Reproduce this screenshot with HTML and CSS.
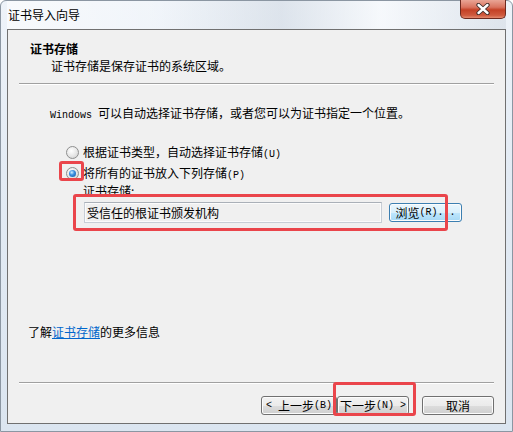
FILE: index.html
```html
<!DOCTYPE html>
<html lang="zh-CN">
<head>
    <meta charset="UTF-8">
    <title>证书导入向导</title>
    <link rel="stylesheet" href="styles.css">
</head>
<body>
    <div class="window">
        <div class="titlebar">
            <div class="title">证书导入向导</div>
            <div class="close">
                <svg width="14" height="12" viewBox="0 0 14 12">
                    <path d="M2.5 2 L11.5 10 M11.5 2 L2.5 10" stroke="#3a2a28" stroke-width="4.2" stroke-linecap="round"/>
                    <path d="M2.5 2 L11.5 10 M11.5 2 L2.5 10" stroke="#ffffff" stroke-width="2.4" stroke-linecap="round"/>
                </svg>
            </div>
        </div>

        <div class="client">
            <div class="header">
                <div class="header-title">证书存储</div>
                <div class="header-sub">证书存储是保存证书的系统区域。</div>
            </div>
            <div class="sep"></div>

            <div class="intro"><span class="en">Windows </span>可以自动选择证书存储，或者您可以为证书指定一个位置。</div>

            <div class="option first">
                <span class="radio"></span>
                <span>根据证书类型，自动选择证书存储<span class="en">(U)</span></span>
            </div>
            <div class="option">
                <span class="radio"><span class="dot"></span></span>
                <span>将所有的证书放入下列存储<span class="en">(P)</span></span>
            </div>
            <div class="store-label">证书存储:</div>
            <div class="store-row">
                <div class="field">受信任的根证书颁发机构</div>
                <div class="btn hot">浏览<span class="en">(R)...</span></div>
            </div>

            <div class="more">了解<a href="#" class="link">证书存储</a>的更多信息</div>

            <div class="sep bottom"></div>
            <div class="buttons">
                <div class="btn back"><span class="en">&lt;&nbsp;</span>上一步<span class="en">(B)</span></div>
                <div class="btn next">下一步<span class="en">(N)&nbsp;&gt;</span></div>
                <div class="btn cancel">取消</div>
            </div>

            <div class="mark mark-radio"></div>
            <div class="mark mark-store"></div>
            <div class="mark mark-next"></div>
        </div>
    </div>
</body>
</html>
```

FILE: styles.css
```css
body {
    margin: 0;
    font-family: "Noto Sans CJK SC", sans-serif;
    font-size: 12px;
    color: #000;
}
.window {
    width: 513px;
    height: 432px;
    box-sizing: border-box;
    padding: 0 6px 7px 6px;
    border: 1px solid #8b96a2;
    border-radius: 6px 6px 0 0;
    background: linear-gradient(180deg, #eef3f9 0%, #e3ebf4 40%, #dbe5f0 100%);
    display: flex;
    flex-direction: column;
}
.titlebar {
    height: 28px;
    flex: none;
    display: flex;
    justify-content: space-between;
    align-items: flex-start;
    background: linear-gradient(90deg, rgba(255,255,255,0.6) 0%, rgba(255,255,255,0.2) 30%, rgba(190,200,212,0.35) 55%, rgba(255,255,255,0.5) 75%, rgba(200,208,218,0.4) 100%);
}
.title {
    padding: 7px 0 0 1px;
    height: 14px;
    line-height: 14px;
}
.close {
    width: 46px;
    height: 19px;
    margin-top: -1px;
    box-sizing: border-box;
    border: 1px solid #6d2a1f;
    border-top: none;
    border-radius: 0 0 5px 5px;
    background: linear-gradient(180deg, #e9a595 0%, #d9745f 40%, #c44126 55%, #cf5a3e 85%, #e48a6f 100%);
    display: flex;
    align-items: center;
    justify-content: center;
}
.client {
    flex: 1;
    position: relative;
    border: 1px solid #707070;
    background: #f0f0f0;
    display: flex;
    flex-direction: column;
}
.en {
    font-family: "Liberation Mono", monospace;
    font-size: 10px;
    line-height: 0;
}
.header {
    padding: 12px 0 0 22px;
}
.header-title {
    font-weight: bold;
    height: 14px;
    line-height: 14px;
}
.header-sub {
    margin: 3px 0 0 21px;
    height: 14px;
    line-height: 14px;
}
.sep {
    flex: none;
    margin: 10px 0 0 11px;
    width: 475px;
    border-top: 1px solid #a0a0a0;
    border-bottom: 1px solid #ffffff;
}
.sep.bottom {
    margin-top: 43px;
}
.intro {
    margin: 21px 0 0 42px;
    height: 14px;
    line-height: 14px;
}
.option {
    display: flex;
    align-items: center;
    gap: 4px;
    margin: 7px 0 0 58px;
    height: 14px;
    line-height: 14px;
}
.option.first {
    margin-top: 25px;
}
.radio {
    width: 13px;
    height: 13px;
    flex: none;
    box-sizing: border-box;
    border-radius: 50%;
    border: 1px solid #8e8f8f;
    background: radial-gradient(circle at 40% 35%, #ffffff 0%, #e6e6e6 55%, #c9c9c9 100%);
    display: flex;
    align-items: center;
    justify-content: center;
}
.dot {
    width: 7px;
    height: 7px;
    border-radius: 50%;
    background: radial-gradient(circle at 40% 35%, #d2f0ff 0%, #3b90e2 40%, #14569f 100%);
}
.store-label {
    margin: 4px 0 0 75px;
    height: 14px;
    line-height: 14px;
}
.store-row {
    display: flex;
    align-items: center;
    gap: 7px;
    margin: 4px 0 0 76px;
    height: 21px;
}
.field {
    width: 298px;
    height: 21px;
    box-sizing: border-box;
    padding-left: 2px;
    line-height: 19px;
    border: 1px solid #c8ced6;
    border-top-color: #aab0b8;
    box-shadow: inset 0 0 0 1px #fbfbfb;
    background: #f0f0f0;
}
.btn {
    height: 19px;
    flex: none;
    box-sizing: border-box;
    border: 1px solid #707070;
    border-radius: 3px;
    box-shadow: inset 0 0 0 1px #fcfcfc;
    background: linear-gradient(180deg, #f2f2f2 0%, #ebebeb 50%, #dddddd 51%, #cfcfcf 100%);
    display: flex;
    align-items: center;
    justify-content: center;
    line-height: 14px;
    white-space: nowrap;
}
.btn.hot {
    width: 73px;
    border-color: #3c7fb1;
    background: linear-gradient(180deg, #eaf6fd 0%, #d9f0fc 50%, #bee6fd 51%, #a7d9f5 100%);
}
.more {
    margin: 102px 0 0 20px;
    height: 14px;
    line-height: 14px;
}
.link {
    color: #0066cc;
    text-decoration: underline;
}
.buttons {
    display: flex;
    justify-content: flex-end;
    margin: 12px 11px 0 0;
}
.back {
    width: 76px;
}
.next {
    width: 72px;
}
.cancel {
    width: 72px;
    margin-left: 13px;
}
.mark {
    position: absolute;
    border: 3px solid #ea454b;
    border-radius: 3px;
    box-sizing: border-box;
}
.mark-radio {
    left: 51px;
    top: 131px;
    width: 25px;
    height: 20px;
}
.mark-store {
    left: 65px;
    top: 164px;
    width: 375px;
    height: 37px;
}
.mark-next {
    left: 325px;
    top: 352px;
    width: 83px;
    height: 34px;
}
```
